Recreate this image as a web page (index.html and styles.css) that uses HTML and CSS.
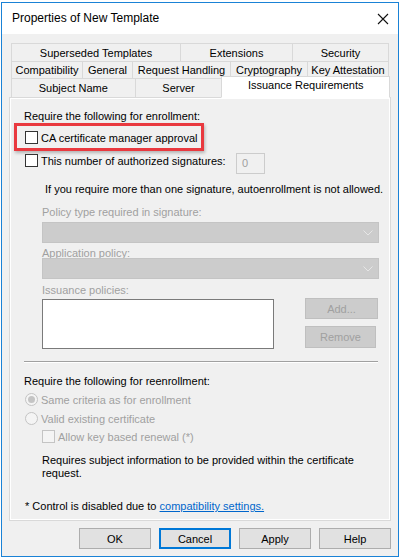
FILE: index.html
```html
<!DOCTYPE html>
<html>
<head>
<meta charset="utf-8">
<link rel="stylesheet" href="styles.css">
</head>
<body>
<div class="window">
  <div class="titlebar">
    <span class="title">Properties of New Template</span>
    <svg class="close" width="12" height="12" viewBox="0 0 12 12"><path d="M1 1L11 11M11 1L1 11" stroke="#111" stroke-width="1.1" fill="none"/></svg>
  </div>
  <div class="dialog">
    <div class="tabs">
      <div class="tabrow r1">
        <div class="tab t-sup">Superseded Templates</div>
        <div class="tab t-ext">Extensions</div>
        <div class="tab t-sec">Security</div>
      </div>
      <div class="tabrow r2">
        <div class="tab t-com">Compatibility</div>
        <div class="tab t-gen">General</div>
        <div class="tab t-req">Request Handling</div>
        <div class="tab t-cry">Cryptography</div>
        <div class="tab t-key">Key Attestation</div>
      </div>
      <div class="tabrow r3">
        <div class="tab t-sub">Subject Name</div>
        <div class="tab t-ser">Server</div>
        <div class="tab t-iss selected">Issuance Requirements</div>
      </div>
    </div>
    <div class="panel">
      <div class="page">
        <div class="line heading">Require the following for enrollment:</div>
        <div class="highlight">
          <span class="check"></span>
          <span class="big">CA certificate manager approval</span>
        </div>
        <div class="sigrow">
          <span class="check"></span>
          <span class="siglabel">This number of authorized signatures:</span>
          <span class="numbox">0</span>
        </div>
        <div class="line note">If you require more than one signature, autoenrollment is not allowed.</div>
        <div class="line dis lbl1">Policy type required in signature:</div>
        <div class="combo c1"><svg width="10" height="6" viewBox="0 0 10 6"><path d="M0.5 0.5L5 5L9.5 0.5" stroke="#e6e6e6" fill="none"/></svg></div>
        <div class="line dis lbl2">Application policy:</div>
        <div class="combo c2"><svg width="10" height="6" viewBox="0 0 10 6"><path d="M0.5 0.5L5 5L9.5 0.5" stroke="#e6e6e6" fill="none"/></svg></div>
        <div class="line dis lbl3">Issuance policies:</div>
        <div class="listrow">
          <div class="listbox"></div>
          <div class="sidebtns">
            <div class="btn disabled add">Add...</div>
            <div class="btn disabled rem">Remove</div>
          </div>
        </div>
        <div class="sep"></div>
        <div class="line heading2">Require the following for reenrollment:</div>
        <div class="optrow r-same"><span class="radio on"></span><span class="dis">Same criteria as for enrollment</span></div>
        <div class="optrow r-valid"><span class="radio"></span><span class="dis">Valid existing certificate</span></div>
        <div class="optrow c-allow"><span class="check dcheck"></span><span class="dis">Allow key based renewal (*)</span></div>
        <div class="requires">Requires subject information to be provided within the certificate<br>request.</div>
        <div class="line foot">* Control is disabled due to <a class="link" href="#">compatibility settings.</a></div>
      </div>
    </div>
    <div class="buttons">
      <div class="btn">OK</div>
      <div class="btn default">Cancel</div>
      <div class="btn">Apply</div>
      <div class="btn">Help</div>
    </div>
  </div>
</div>
</body>
</html>
```

FILE: styles.css
```css
* { box-sizing: border-box; }
html, body { margin: 0; padding: 0; background: #ffffff; }
body {
  font-family: "Liberation Sans", Arial, sans-serif;
  font-size: 11px;
  color: #000;
  padding: 2px 3px 0 1px;
}
.window {
  width: 398px;
  height: 555px;
  border: 1px solid #1a82d6;
  display: flex;
  flex-direction: column;
  background: #f0f0f0;
}
.titlebar {
  height: 31px;
  background: #ffffff;
  display: flex;
  align-items: center;
  padding-left: 10px;
  padding-right: 9px;
  flex: none;
}
.title { font-size: 12px; flex: 1; padding-bottom: 1px; }
.close { display: block; margin-top: 1px; }
.dialog {
  flex: 1;
  padding: 9px 7px 0 7px;
  display: flex;
  flex-direction: column;
}
.tabs { padding: 0 1px 0 2px; }
.tabrow { display: flex; }
.tab {
  border: 1px solid #d9d9d9;
  background: #f0f0f0;
  text-align: center;
  margin-left: -1px;
  white-space: nowrap;
  display: flex;
  align-items: center;
  justify-content: center;
}
.tab:first-child { margin-left: 0; }
.r1 .tab { height: 19px; }
.r2 { margin-top: -1px; }
.r2 .tab { height: 18px; }
.r3 { margin-top: -1px; }
.r3 .tab { height: 20px; }
.t-sup { width: 170px; }
.t-ext { width: 113px; }
.t-sec { width: 97px; }
.t-com { width: 72px; }
.t-gen { width: 51px; }
.t-req { width: 99px; }
.t-cry { width: 78px; }
.t-key { width: 82px; }
.t-sub { width: 125px; }
.t-ser { width: 88px; }
.r3 .tab.selected {
  width: 169px;
  height: 22px;
  margin-top: -2px;
  background: #ffffff;
  border-bottom-color: #ffffff;
  position: relative;
  z-index: 1;
  align-items: flex-start;
  padding-top: 2px;
}
.panel {
  margin-top: -1px;
  height: 424px;
  border: 1px solid #d9d9d9;
  background: #ffffff;
  padding: 1px;
}
.page {
  height: 100%;
  background: #f0f0f0;
  padding: 0 10px 0 13px;
  display: flex;
  flex-direction: column;
}
.line { height: 14px; line-height: 14px; white-space: nowrap; flex: none; }
.dis { color: #a0a0a0; }
.heading { margin-top: 10px; }
.highlight {
  margin-left: -10px;
  width: 190px;
  height: 28px;
  border: 3px solid #e9393f;
  box-shadow: 1px 2px 3px rgba(0,0,0,0.25);
  display: flex;
  align-items: center;
  padding-left: 8px;
  flex: none;
}
.big { font-size: 11px; margin-left: 3px; padding-top: 1px; white-space: nowrap; }
.check {
  width: 13px;
  height: 13px;
  border: 1px solid #333333;
  background: #ffffff;
  flex: none;
  display: inline-block;
}
.dcheck { border-color: #c4c4c4; background: #f4f4f4; }
.sigrow {
  display: flex;
  align-items: flex-start;
  height: 24px;
  padding-left: 1px;
  flex: none;
}
.sigrow .check { margin-top: 3px; }
.siglabel { margin-left: 3px; margin-top: 3px; line-height: 14px; width: 195px; flex: none; white-space: nowrap; }
.numbox {
  margin-top: 2px;
  width: 29px;
  height: 21px;
  border: 1px solid #cccccc;
  background: #f0f0f0;
  color: #a0a0a0;
  padding-left: 5px;
  line-height: 19px;
}
.note { margin-top: 7px; padding-left: 21px; }
.lbl1 { margin-top: 9px; padding-left: 18px; }
.combo {
  margin-left: 18px;
  width: 337px;
  height: 21px;
  background: #cccccc;
  border: 1px solid #c4c4c4;
  display: flex;
  align-items: center;
  justify-content: flex-end;
  padding-right: 5px;
  flex: none;
}
.c1 { margin-top: 3px; }
.c2 { margin-top: -2px; }
.combo svg { display: block; }
.lbl2 { margin-top: 3px; padding-left: 18px; }
.lbl3 { margin-top: 4px; padding-left: 18px; }
.listrow {
  margin-top: 2px;
  margin-left: 18px;
  display: flex;
  height: 50px;
  flex: none;
}
.listbox {
  width: 232px;
  height: 50px;
  background: #ffffff;
  border: 1px solid #7a7a7a;
}
.sidebtns {
  margin-left: 31px;
  display: flex;
  flex-direction: column;
}
.btn {
  height: 21px;
  width: 73px;
  background: #e1e1e1;
  border: 1px solid #adadad;
  display: flex;
  align-items: center;
  justify-content: center;
  flex: none;
}
.btn.disabled {
  background: #cccccc;
  border-color: #bfbfbf;
  color: #a0a0a0;
}
.add { width: 73px; height: 21px; margin-top: -1px; }
.rem { width: 71px; height: 22px; margin-top: 7px; }
.sep {
  margin-top: 12px;
  width: 354px;
  height: 1px;
  background: #a0a0a0;
  border-bottom: 1px solid #ffffff;
  box-sizing: content-box;
  flex: none;
}
.heading2 { margin-top: 11px; }
.optrow {
  display: flex;
  align-items: center;
  height: 19px;
  padding-left: 1px;
  flex: none;
}
.optrow > span:last-child { margin-left: 3px; }
.r-same { margin-top: 2px; }
.radio {
  width: 13px;
  height: 13px;
  border-radius: 50%;
  border: 1px solid #c4c4c4;
  background: #f4f4f4;
  flex: none;
  display: flex;
  align-items: center;
  justify-content: center;
}
.radio.on::after {
  content: "";
  width: 7px;
  height: 7px;
  border-radius: 50%;
  background: #c4c4c4;
}
.c-allow { padding-left: 18px; height: 17px; }
.requires {
  margin-top: 9px;
  margin-left: 18px;
  line-height: 13px;
  white-space: nowrap;
  flex: none;
}
.foot { margin-top: 19px; padding-left: 1px; }
.link { color: #0066cc; text-decoration: underline; }
.buttons {
  display: flex;
  justify-content: flex-end;
  gap: 8px;
  margin-top: 7px;
}
.buttons .btn { width: 72px; }
.btn.default { border: 2px solid #0078d7; }
```
